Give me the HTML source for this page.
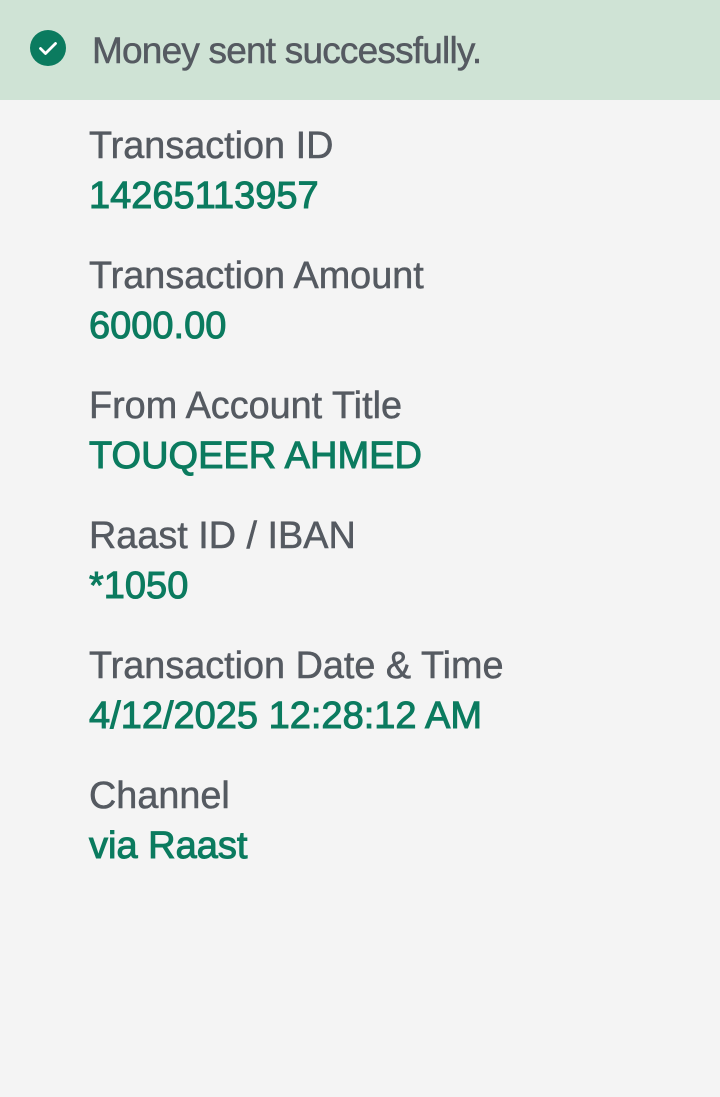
<!DOCTYPE html>
<html><head><meta charset="utf-8"><style>
html,body{margin:0;padding:0;}
body{width:720px;height:1097px;background:#f4f4f4;position:relative;overflow:hidden;font-family:"Liberation Sans",sans-serif;}
.hdr{position:absolute;left:0;top:0;width:720px;height:100px;background:#cfe3d5;}
.t{position:absolute;left:89px;line-height:38px;white-space:nowrap;}
.l{color:#555a61;font-size:37.8px;-webkit-text-stroke:0.5px #555a61;}
.v{color:#0b7b5f;font-size:38px;-webkit-text-stroke:1px #0b7b5f;}
</style></head><body>
<div class="hdr"></div>
<svg style="position:absolute;left:30px;top:30px" width="36" height="36" viewBox="0 0 36 36"><circle cx="18" cy="18" r="18" fill="#0b7b5f"/><path d="M10.5 18.5l5 5 10-10" fill="none" stroke="#fff" stroke-width="2.8" stroke-linecap="round" stroke-linejoin="round"/></svg>
<div class="t l" style="left:92px;top:32px;font-size:37px;letter-spacing:-0.8px">Money sent successfully.</div>

<div class="t l" style="top:127px">Transaction ID</div>
<div class="t v" style="top:177px">14265113957</div>
<div class="t l" style="top:257px">Transaction Amount</div>
<div class="t v" style="top:307px">6000.00</div>
<div class="t l" style="top:387px">From Account Title</div>
<div class="t v" style="top:437px">TOUQEER AHMED</div>
<div class="t l" style="top:517px">Raast ID / IBAN</div>
<div class="t v" style="top:567px">*1050</div>
<div class="t l" style="top:647px">Transaction Date &amp; Time</div>
<div class="t v" style="top:697px">4/12/2025 12:28:12 AM</div>
<div class="t l" style="top:777px">Channel</div>
<div class="t v" style="top:827px">via Raast</div>
</body></html>
